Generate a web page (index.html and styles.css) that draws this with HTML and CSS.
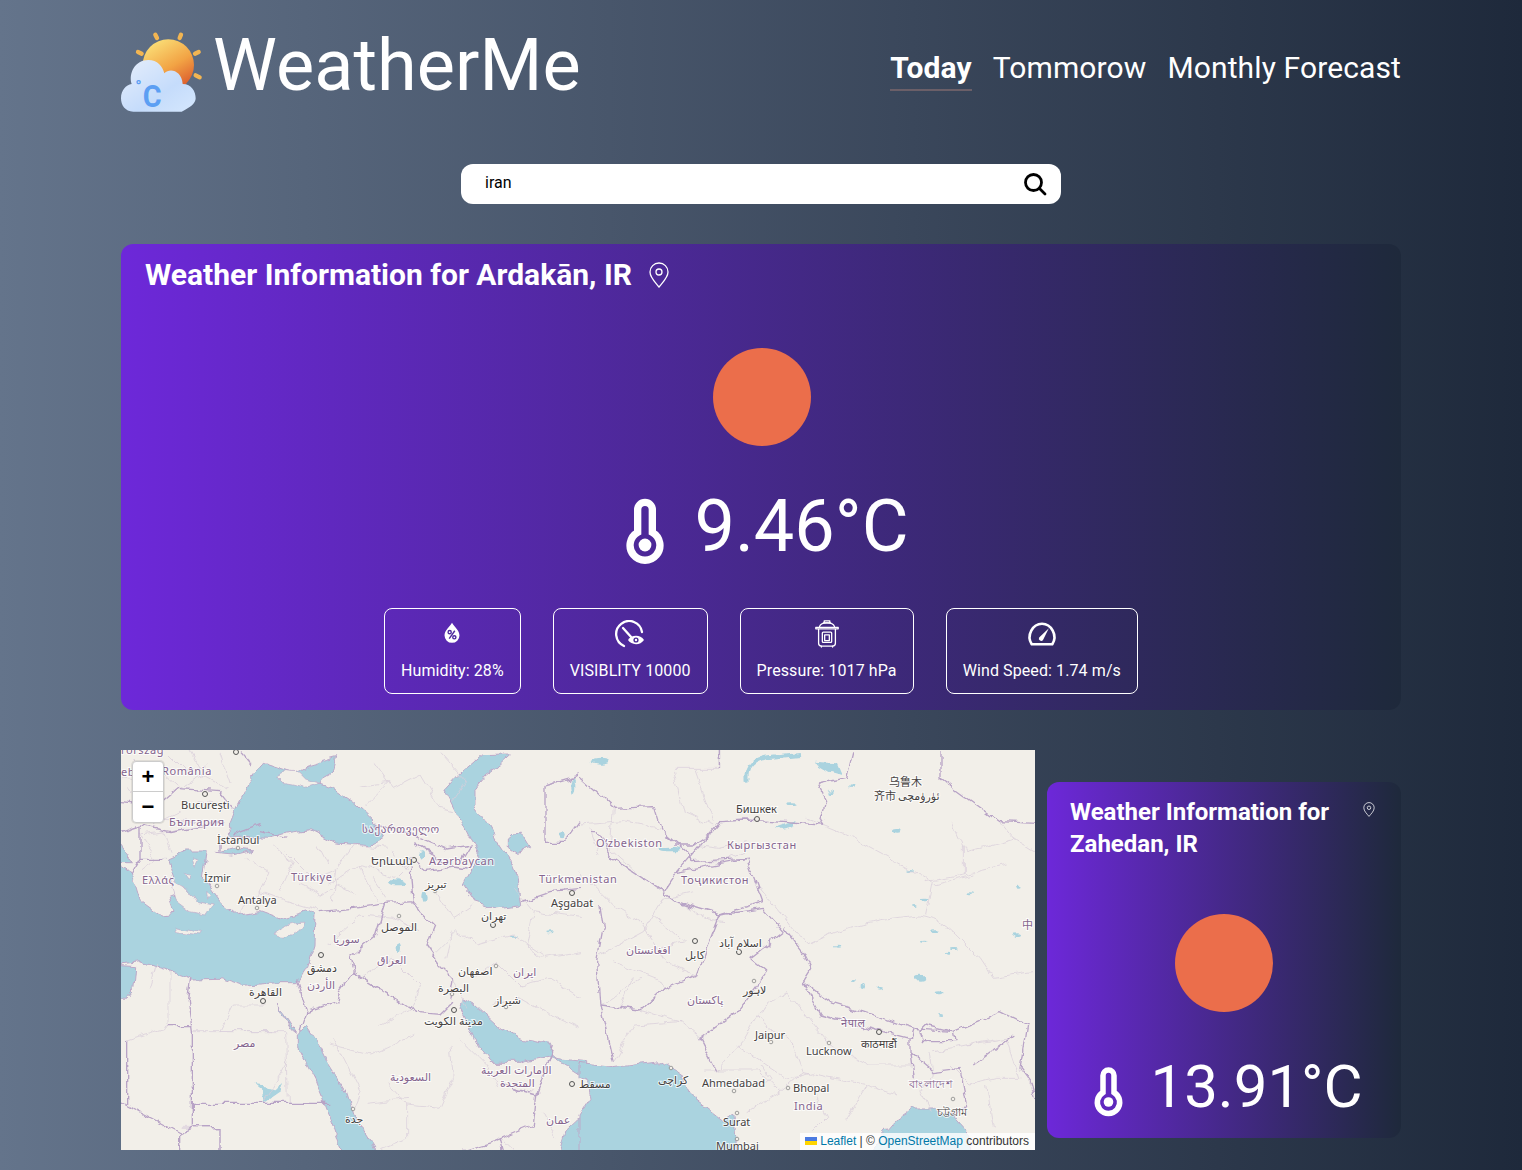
FILE: index.html
```html
<!DOCTYPE html>
<html lang="en">
<head>
<meta charset="utf-8">
<title>WeatherMe</title>
<link rel="stylesheet" href="styles.css">
</head>
<body>
<div class="page">
  <header class="header">
    <div class="brand">
      <svg class="logo" viewBox="63 60 240 246" aria-hidden="true">
        <defs>
          <linearGradient id="sunG" x1="0.2" y1="0" x2="0.8" y2="1"><stop offset="0" stop-color="#fbe27a"/><stop offset=".55" stop-color="#f2a344"/><stop offset="1" stop-color="#d9532a"/></linearGradient>
          <linearGradient id="cloudG" x1="0" y1="0" x2="1" y2="1"><stop offset="0" stop-color="#e6eefb"/><stop offset=".6" stop-color="#c5dcfb"/><stop offset="1" stop-color="#d5e7fd"/></linearGradient>
        </defs>
        <circle cx="205" cy="165" r="77" fill="url(#sunG)"/>
        <g stroke="#f2b552" stroke-width="13" stroke-linecap="round">
          <path d="M166 74l5 10M243 74l-4 10M114 126l11 5M296 126l-11 5M287 196l12 6"/>
        </g>
        <path d="M100 305C75 305 63 285 63 265C63 240 78 225 95 222C85 190 105 150 145 150C172 150 188 168 193 190C210 172 245 182 248 222C275 222 287 245 287 265C287 280 272 292 245 305Z" fill="url(#cloudG)"/>
        <text transform="translate(128 290) scale(.9 1)" class="logo-c">C</text>
        <text x="106" y="246" class="logo-deg">°</text>
      </svg>
      <h1 class="brand-name">WeatherMe</h1>
    </div>
    <nav class="nav">
      <a class="nav-link nav-active">Today</a>
      <a class="nav-link">Tommorow</a>
      <a class="nav-link">Monthly Forecast</a>
    </nav>
  </header>

  <div class="search">
    <span class="search-text">iran</span>
    <svg class="search-icon" viewBox="0 0 24 24" aria-hidden="true"><circle cx="10.500" cy="10.500" r="8" /><path d="M16.500 16.500L22 22"/></svg>
  </div>

  <section class="card card-main">
    <div class="card-title">
      <h2>Weather Information for Ardakān, IR</h2>
      <svg class="pin pin-lg" viewBox="0 0 20 26" aria-hidden="true"><path d="M10 25C6 20 1 15.500 1 10a9 9 0 0 1 18 0C19 15.500 14 20 10 25Z"/><circle cx="10" cy="10" r="3"/></svg>
    </div>
    <div class="sun sun-main"></div>
    <div class="temp temp-main">
      <svg class="thermo thermo-lg" viewBox="0 0 27 47" aria-hidden="true"><path d="M8 24.500V7.500a5.500 5.500 0 0 1 11 0V24.500a11.200 11.200 0 1 1-11 0Z"/><circle cx="13.500" cy="34" r="4.800"/></svg>
      <span>9.46°C</span>
    </div>
    <div class="tiles">
      <div class="tile">
        <svg class="tile-icon" viewBox="-3 -1 30 30" aria-hidden="true"><path class="solid" d="M12 2C9 7 4 10.500 4 15.500a8 8 0 0 0 16 0C20 10.500 15 7 12 2Z"/><g class="cut"><circle cx="9.500" cy="12" r="1.700"/><circle cx="14.500" cy="17.500" r="1.700"/><path d="M15 10.500L9 19"/></g></svg>
        <span>Humidity: 28%</span>
      </div>
      <div class="tile">
        <svg class="tile-icon" viewBox="0 0 30 28" aria-hidden="true"><g class="line"><path d="M9 26A13 13 0 1 1 27 12"/><path d="M8 8l9 10"/></g><path class="solid" d="M13 20c3-5 12-6 16 0c-4 6-13 5-16 0Z"/><circle class="cut-fill" cx="21" cy="20" r="2.600"/><circle class="solid" cx="21" cy="20" r="1.200"/></svg>
        <span>VISIBLITY 10000</span>
      </div>
      <div class="tile">
        <svg class="tile-icon" viewBox="0 0 26 30" aria-hidden="true"><g class="line thin"><path d="M9 3h8M10 3V1h6v2"/><path d="M5 7c1-3 4-4 8-4s7 1 8 4"/><path d="M1 8h24v1.500H1z"/><path d="M4 10v15c0 2 1 3 3 3h12c2 0 3-1 3-3V10"/><rect x="8" y="13" width="10" height="11" rx="1"/><rect x="10.500" y="16" width="5" height="6"/><path d="M7 28v1M19 28v1"/></g></svg>
        <span>Pressure: 1017 hPa</span>
      </div>
      <div class="tile">
        <svg class="tile-icon" viewBox="0 0 28 24" aria-hidden="true"><g class="line"><path d="M5 21h18c5-8-1-18-9-18S0 13 5 21Z"/></g><path class="solid" d="M20 7l-5 10a2 2 0 0 1-3.500-2Z"/></svg>
        <span>Wind Speed: 1.74 m/s</span>
      </div>
    </div>
  </section>

  <div class="lower">
    <div class="map">
      <svg class="map-canvas" viewBox="0 0 914 400">
        <defs>
          <filter id="wiggle" x="-20" y="-20" width="960" height="440" filterUnits="userSpaceOnUse">
            <feTurbulence type="fractalNoise" baseFrequency=".07" numOctaves="3" seed="4" result="n"/>
            <feDisplacementMap in="SourceGraphic" in2="n" scale="9" xChannelSelector="R" yChannelSelector="G"/>
          </filter>
        </defs>
        <rect width="914" height="400" fill="#f2efe9"/>
        <g filter="url(#wiggle)">
        <g transform="translate(-1,-5) scale(.33333)">
          <g class="water">
            <path d="M325 240L345 190L385 110L430 55L480 72L520 85L565 62L650 38L640 78L610 95L600 118L640 130L700 170L775 240L790 282L750 302L650 294L570 254L500 264L440 280L380 274L330 274Z"/>
            <path d="M1080 32L1168 30L1135 60L1095 90L1062 130L1062 182L1100 232L1140 300L1170 345L1192 400L1202 482L1130 492L1062 470L1030 420L1062 360L1082 332L1050 280L1010 200L975 130L1010 92Z"/>
            <path d="M1165 282L1198 255L1232 310L1190 322L1165 305Z"/>
            <path d="M-30 345L25 380L50 420L65 470L120 510L165 505L150 460L175 450L140 345L200 318L262 318L250 400L300 470L350 512L420 500L480 522L560 498L585 510L582 600L560 670L530 716L470 716L370 724L300 700L215 702L130 672L60 650L-30 660Z"/>
            <path d="M-30 660L50 665L45 730L20 760L-30 755Z"/>
            <path d="M290 325L350 308L400 315L340 330Z"/>
            <path d="M-30 250L20 320L40 350L-30 350Z"/>
            <path d="M472 780L490 800L530 862L515 850Z"/>
            <path d="M532 870L560 845L600 905L622 950L680 1042L702 1110L782 1240L672 1240L642 1150L582 1000L532 905Z"/>
            <path d="M1030 762L1062 780L1130 842L1200 882L1296 898L1292 925L1310 940L1400 950L1400 1000L1340 962L1290 932L1200 952L1110 952L1072 902L1050 852L1020 790Z"/>
            <path d="M1400 1100L1335 1160L1312 1240L1400 1240Z"/>
          </g>
          <g class="land">
            <path d="M462 570C480 540 520 530 552 532C540 560 500 590 462 570Z"/>
            <path d="M165 545L245 560L240 570L170 560Z"/>
            <path d="M470 95L500 80L540 85L560 105L600 118L560 130L520 120L490 115Z"/>
            <path d="M150 400L200 430L230 470L280 480L260 510L210 500L170 470Z"/>
            <path d="M215 340L235 345L225 365Z"/><path d="M190 380L215 385L205 400Z"/><path d="M260 440L275 450L262 462Z"/>
          </g>
          <g fill="#aad3df">
            <ellipse cx="830" cy="412" rx="22" ry="9"/><ellipse cx="905" cy="330" rx="8" ry="14"/><ellipse cx="915" cy="455" rx="8" ry="18"/>
            <path d="M400 1020L470 1030L495 1005L485 1040L435 1075L430 1045Z"/>
            <ellipse cx="838" cy="605" rx="8" ry="16"/><ellipse cx="1180" cy="575" rx="10" ry="3"/><ellipse cx="1290" cy="565" rx="14" ry="3"/><ellipse cx="1360" cy="120" rx="6" ry="24"/>
            <ellipse cx="1325" cy="268" rx="12" ry="12"/>
          </g>
          <g class="thin-b">
            <path d="M620 600L720 510L820 520L900 560M620 420L720 360L830 400L880 350M500 320L580 400L650 370L700 300L800 310M420 440L500 470L600 500M380 340L450 380L420 440L350 510M590 300L620 360M720 360L770 470M460 300L520 350L480 440M540 420L600 450L650 420L710 450M760 400L800 460M650 370L640 470M820 320L860 380"/>
            <path d="M60 380L110 340L60 270L140 260L250 240M100 60L180 130L250 90L320 130M20 130L90 220L230 230M200 0L250 90M300 20L330 120M360 20L400 60M130 260L150 320M40 40L100 100L60 160M150 30L200 80L260 60M100 240L180 200M230 170L310 180M0 100L60 110"/>
            <path d="M760 50L820 130L900 90L960 190L1000 200M720 120L810 110L740 180M960 20L1040 110L1000 170"/>
            <path d="M950 620L1010 560L1070 600L1180 570L1260 640L1380 620M1060 700L1130 650L1200 720L1290 700L1380 760M1120 780L1200 760L1270 800L1380 850M1000 700L1040 790M1180 430L1240 500L1380 520M950 440L1000 520L1060 480M1000 560L980 640M1240 500L1220 600L1280 640"/>
            <path d="M720 700L820 640L900 720L870 790M780 850L870 790M640 880L720 1040L700 1090M800 1010L860 1080L860 1180L780 1210M990 900L1000 1000L960 1090L860 1080M630 900L750 930L880 870M20 885L150 845L215 845M150 680L150 845M110 660L90 730M300 860L340 780L440 780M220 860L500 860L505 1075M505 950L430 1075M300 860L450 860M1020 880L1100 960L1130 1020"/>
            <path d="M1270 1100L1310 1180M1140 1180L1180 1216M740 1075L870 1060M185 1150L300 1150L300 1216"/>
          </g>
          <g class="bold-b">
            <path d="M600 500L700 490L800 475L880 470M880 470L900 500L942 540L918 600L960 660L1000 700L990 760M870 370L880 470M800 475L770 570L690 635L700 680L655 745L650 770L560 800L540 860M530 700L560 800M700 680L890 802L962 808L1000 770"/>
            <path d="M215 702L205 770L217 860L217 1075L625 1075M217 1075L217 1148M182 1164L217 1148H300V1216M0 1068L182 1164V1216M152 845H217M20 885V1075"/>
            <path d="M1250 1050L1240 1140L1120 1190L1030 1216M1140 1020L1250 1050L1300 900M1140 1180L1150 1216"/>
            <path d="M1202 470L1290 440L1380 430M1275 120V292H1335L1380 230M1275 120L1380 90M770 240L860 262L980 312L1050 300M870 340L920 380L1000 366L1040 372M880 290L970 350"/>
            <path d="M0 170L110 180L170 130L300 140L340 190M60 240L150 260L310 230M60 240L60 340L130 340M0 260L60 240M60 340L30 390"/>
            <path d="M360 20L395 60M300 290L300 320M340 270L420 240"/>
            <path d="M1050 300L1020 350M500 280L420 260"/>
          </g>
        </g>
        <g transform="translate(459,-5) scale(.33333)">
          <g class="water">
            <path d="M-3 955L100 968L240 950L310 1000L340 1060L430 1130L462 1110L472 1240L-3 1240L-3 1110L30 1060L20 1010L-3 1000Z"/>
            <path d="M945 1130L1000 1092L1060 1092L1120 1112L1172 1170L1172 1240L850 1240Z"/>
          </g>
          <path d="M500 110C495 70 520 40 580 38L660 30" fill="none" stroke="#aad3df" stroke-width="12"/>
          <path d="M700 50L770 55L785 90L750 80Z" fill="#aad3df"/>
          <g fill="#aad3df">
            <path d="M585 250L650 228L640 250L600 258Z"/>
            <ellipse cx="955" cy="262" rx="13" ry="7"/><ellipse cx="1035" cy="462" rx="14" ry="4"/><ellipse cx="1020" cy="698" rx="13" ry="9"/><ellipse cx="1078" cy="742" rx="13" ry="6"/><ellipse cx="905" cy="733" rx="10" ry="4"/><ellipse cx="850" cy="720" rx="5" ry="9"/>
            <ellipse cx="820" cy="708" rx="8" ry="3"/><ellipse cx="1060" cy="560" rx="15" ry="4"/><ellipse cx="1310" cy="572" rx="13" ry="4"/><ellipse cx="1170" cy="445" rx="9" ry="3"/><ellipse cx="995" cy="375" rx="10" ry="3"/><ellipse cx="1120" cy="612" rx="10" ry="3"/><ellipse cx="1030" cy="590" rx="10" ry="3"/><ellipse cx="770" cy="605" rx="8" ry="3"/><ellipse cx="1315" cy="425" rx="7" ry="3"/>
            <ellipse cx="60" cy="50" rx="28" ry="9"/><ellipse cx="270" cy="312" rx="35" ry="7"/><ellipse cx="632" cy="176" rx="16" ry="4"/><ellipse cx="755" cy="140" rx="7" ry="4"/><ellipse cx="815" cy="128" rx="7" ry="4"/><ellipse cx="1000" cy="480" rx="7" ry="3"/><ellipse cx="1080" cy="810" rx="9" ry="3"/><ellipse cx="1100" cy="620" rx="9" ry="3"/>
          </g>
          <g class="thin-b">
            <path d="M0 240L130 230L240 250M280 75L310 200L400 240M345 75L400 230M420 15V70H280M100 190L90 310L170 380M30 250L60 330M0 380L100 480L180 530"/>
            <path d="M60 630L190 560L250 460L340 440M180 530L260 650L350 690M100 650L230 700L250 730M160 700L120 790M60 780L180 700M300 470L380 520L430 530M220 510L310 590L240 610M340 300L420 310L500 290M330 350L430 350L500 310"/>
            <path d="M180 795L300 830L360 880M100 950L160 840L300 830M410 980L480 900L530 810L620 740M530 810L640 900L670 980L600 1040L500 1100M620 740L750 900L870 960L1000 960M670 980L860 1020L950 1050M860 1020L800 1120M470 900L620 1000L700 980M370 975L530 975L600 1040M540 960L570 1000L540 1030M700 1040L740 1120L700 1160"/>
            <path d="M680 600C800 540 900 520 1020 510C1100 520 1130 580 1200 640L1240 700L1380 680M1040 410L1150 390L1280 360M1150 300L1150 390M1120 230L1160 320L1300 280M1260 230L1300 280L1365 320M680 220L800 270L1060 410L1040 510M1060 420L1180 390M540 430L680 600"/>
            <path d="M1050 930L1060 990L1020 1040L1050 1100M1160 900L1280 880L1320 1000L1250 1000L1170 1020L1110 960M1220 1020L1240 1150M1340 1000L1365 1060M1060 920L1250 880"/>
          </g>
          <g class="bold-b">
            <path d="M0 100L100 190L220 185L240 250L320 320L330 350L500 340L530 420L548 470L420 510L350 690L250 730L180 795L60 780L50 650L70 545L60 480"/>
            <path d="M50 260L100 340L250 440L290 380L420 230L500 225L720 240L740 170L715 120L800 100L820 15M290 380L500 340M250 440L290 470L420 510M30 260L50 260M280 300L340 300L400 260"/>
            <path d="M60 780L100 950M410 980L360 880L470 800L560 680L510 640L612 560L550 490L420 510M610 545L670 620L695 670L670 710L750 770L850 800L1000 850L1120 860L1260 800L1340 840L1320 970L1350 1010L1365 1060M670 710L720 810L990 880L1000 850"/>
            <path d="M1020 860L1040 840L1120 860L1125 890L1030 890Z"/>
            <path d="M990 920L1060 980L1140 970L1160 1080L1130 1120M990 880L990 920L1000 1000M1180 960L1300 870M1080 15L1080 100L1260 230L1365 235"/>
            <path d="M418 15V70"/>
          </g>
        </g>
        </g>
        <g class="city-dots">
          <circle cx="115" cy="2" r="2.500"/><circle cx="84" cy="44" r="2.500"/><circle cx="293" cy="110" r="2.500"/><circle cx="372" cy="175" r="2.500"/><circle cx="142" cy="251" r="2.500"/><circle cx="200" cy="205" r="2.500"/><circle cx="333" cy="260" r="2.500"/><circle cx="451" cy="143" r="2.500"/><circle cx="636" cy="69" r="2.500"/><circle cx="574" cy="191" r="2.500"/><circle cx="618" cy="202" r="2.500"/><circle cx="758" cy="282" r="2.500"/><circle cx="451" cy="334" r="2.500"/>
        </g>
        <g class="city-open">
          <circle cx="117" cy="98" r="1.800"/><circle cx="96" cy="136" r="1.800"/><circle cx="136" cy="158" r="1.800"/><circle cx="278" cy="166" r="1.800"/><circle cx="314" cy="141" r="1.800"/><circle cx="375" cy="216" r="1.800"/><circle cx="331" cy="244" r="1.800"/><circle cx="385" cy="257" r="1.800"/><circle cx="232" cy="359" r="1.800"/><circle cx="633" cy="231" r="1.800"/><circle cx="650" cy="292" r="1.800"/><circle cx="708" cy="293" r="1.800"/><circle cx="667" cy="338" r="1.800"/><circle cx="613" cy="341" r="1.800"/><circle cx="616" cy="363" r="1.800"/><circle cx="616" cy="389" r="1.800"/><circle cx="550" cy="318" r="1.800"/><circle cx="832" cy="349" r="1.800"/>
        </g>
        <g class="map-labels">
          <text x="0" y="4" class="c">rország</text>
          <text x="0" y="26" class="c">eb</text>
          <text x="41" y="25" class="c">România</text>
          <text x="60" y="59" class="k">București</text>
          <text x="48" y="76" class="c">България</text>
          <text x="96" y="94" class="k">İstanbul</text>
          <text x="21" y="134" class="c">Ελλάς</text>
          <text x="83" y="132" class="k">İzmir</text>
          <text x="170" y="131" class="c">Türkiye</text>
          <text x="117" y="154" class="k">Antalya</text>
          <text x="241" y="83" class="c">საქართველო</text>
          <text x="250" y="115" class="k">Երևան</text>
          <text x="308" y="115" class="c">Azərbaycan</text>
          <text x="304" y="138" class="k">تبریز</text>
          <text x="360" y="170" class="k">تهران</text>
          <text x="418" y="133" class="c">Türkmenistan</text>
          <text x="430" y="157" class="k">Aşgabat</text>
          <text x="260" y="181" class="k">الموصل</text>
          <text x="212" y="193" class="c">سوریا</text>
          <text x="186" y="222" class="k">دمشق</text>
          <text x="256" y="214" class="c">العراق</text>
          <text x="186" y="239" class="c">الأردن</text>
          <text x="128" y="246" class="k">القاهرة</text>
          <text x="337" y="225" class="k">اصفهان</text>
          <text x="392" y="226" class="c">ایران</text>
          <text x="317" y="242" class="k">البصرة</text>
          <text x="373" y="254" class="k">شیراز</text>
          <text x="303" y="275" class="k">مدينة الكويت</text>
          <text x="113" y="297" class="c">مصر</text>
          <text x="269" y="331" class="c">السعودية</text>
          <text x="360" y="324" class="c">الإمارات العربية</text>
          <text x="379" y="337" class="c">المتحدة</text>
          <text x="224" y="373" class="k">جدة</text>
          <text x="425" y="374" class="c">عمان</text>
          <text x="458" y="338" class="k">مسقط</text>
          <text x="475" y="97" class="c">O‘zbekiston</text>
          <text x="560" y="134" class="c">Тоҷикистон</text>
          <text x="615" y="63" class="k">Бишкек</text>
          <text x="606" y="99" class="c">Кыргызстан</text>
          <text x="505" y="204" class="c">افغانستان</text>
          <text x="564" y="209" class="k">کابل</text>
          <text x="598" y="197" class="k">اسلام آباد</text>
          <text x="566" y="254" class="c">پاکستان</text>
          <text x="622" y="244" class="k">لاہور</text>
          <text x="634" y="289" class="k">Jaipur</text>
          <text x="685" y="305" class="k">Lucknow</text>
          <text x="581" y="337" class="k">Ahmedabad</text>
          <text x="672" y="342" class="k">Bhopal</text>
          <text x="673" y="360" class="c">India</text>
          <text x="602" y="376" class="k">Surat</text>
          <text x="595" y="400" class="k">Mumbai</text>
          <text x="537" y="334" class="k">کراچی</text>
          <text x="720" y="277" class="c">नेपाल</text>
          <text x="740" y="298" class="k">काठमाडौं</text>
          <text x="788" y="338" class="c">বাংলাদেশ</text>
          <text x="816" y="366" class="k">চট্টগ্রাম</text>
          <text x="768" y="36" class="k">乌鲁木</text>
          <text x="753" y="50" class="k">齐市</text>
          <text x="777" y="50" class="k">ئۈرۈمچى</text>
          <text x="901" y="179" class="c">中</text>
        </g>
      </svg>
      <div class="zoom">
        <div class="zoom-btn zoom-plus">+</div>
        <div class="zoom-btn">−</div>
      </div>
      <div class="attrib"><svg class="flag" viewBox="0 0 12 8" aria-hidden="true"><rect width="12" height="4" fill="#4C7BE1"/><rect y="4" width="12" height="4" fill="#FFD500"/></svg> <a class="attrib-link">Leaflet</a> | © <a class="attrib-link">OpenStreetMap</a> contributors</div>
    </div>

    <section class="card card-side">
      <div class="card-title card-title-side">
        <h2>Weather Information for Zahedan, IR</h2>
        <svg class="pin pin-sm" viewBox="0 0 20 26" aria-hidden="true"><path d="M10 25C6 20 1 15.500 1 10a9 9 0 0 1 18 0C19 15.500 14 20 10 25Z"/><circle cx="10" cy="10" r="3"/></svg>
      </div>
      <div class="sun sun-side"></div>
      <div class="temp temp-side">
        <svg class="thermo thermo-sm" viewBox="0 0 27 47" aria-hidden="true"><path d="M8 24.500V7.500a5.500 5.500 0 0 1 11 0V24.500a11.200 11.200 0 1 1-11 0Z"/><circle cx="13.500" cy="34" r="4.800"/></svg>
        <span>13.91°C</span>
      </div>
    </section>
  </div>
</div>
</body>
</html>
```

FILE: styles.css
```css
* { box-sizing: border-box; }
html, body { margin: 0; padding: 0; }
body {
  min-height: 1170px;
  overflow: hidden;
  background: linear-gradient(to right, #64748b, #1e293b);
  font-family: Roboto, "Liberation Sans", sans-serif;
  color: #fff;
}
.page { width: 1280px; margin: 0 auto; height: 1170px; }

.header { display: flex; justify-content: space-between; align-items: flex-start; height: 164px; }
.brand { display: flex; align-items: flex-start; padding-top: 30px; }
.logo { width: 80px; height: 82px; display: block; overflow: visible; }
.logo-c { font: 700 96px Roboto, sans-serif; fill: #5c9ff3; }
.logo-deg { font: 700 50px Roboto, sans-serif; fill: #5c9ff3; }
.brand-name { margin: -4px 0 0 12px; font-size: 72px; line-height: 80px; font-weight: 400; letter-spacing: .1px; }
.nav { display: flex; gap: 21px; padding-top: 50px; }
.nav-link { font-size: 30px; line-height: 36px; padding-bottom: 6px; color: #fff; letter-spacing: .12px; }
.nav-active { font-weight: 700; border-bottom: 2px solid #6b5f68; height: 41px; }

.search {
  width: 600px; height: 40px; margin: 0 auto 40px; padding: 0 14px 0 24px;
  display: flex; align-items: center; justify-content: space-between;
  background: #fff; border-radius: 12px; color: #000; font-size: 16px;
}
.search-text { margin-top: -3px; }
.search-icon { width: 24px; height: 24px; fill: none; stroke: #000; stroke-width: 2.800; stroke-linecap: round; }

.card { background: linear-gradient(to right, #6d28d9, #1e293b); border-radius: 12px; }
.card-main { height: 466px; padding: 13px 24px 0; display: flex; flex-direction: column; align-items: center; }
.card-title { display: flex; align-items: center; align-self: stretch; }
.card-title h2 { margin: 0; font-size: 30px; line-height: 36px; font-weight: 700; }
.pin { fill: none; stroke: #fff; stroke-width: 1.300; }
.pin-lg { width: 20px; height: 26px; margin-left: 17px; }

.sun { border-radius: 50%; background: #eb6e4b; flex: none; }
.sun-main { width: 98px; height: 98px; margin: 55px 0 0 1px; }
.temp { display: flex; align-items: center; }
.temp-main { margin: 30px 0 0 14px; height: 100px; font-size: 72px; gap: 31px; }
.thermo { fill: none; stroke: #fff; stroke-width: 5.500; overflow: visible; }
.thermo circle { fill: #fff; stroke: none; }
.thermo-lg { width: 36px; height: 64px; margin-top: 10px; }
.thermo-sm { width: 27px; height: 47px; margin-top: 10px; }

.tiles { display: flex; gap: 32px; margin-top: 32px; }
.tile {
  height: 86px; padding: 12px 16px 0; border: 1px solid #fff; border-radius: 8px;
  display: flex; flex-direction: column; align-items: center; font-size: 16px; line-height: 24px; letter-spacing: .1px;
}
.tile-icon { height: 28px; width: 32px; margin-bottom: 11px; margin-top: -1px; }
.solid { fill: #fff; }
.cut { fill: none; stroke: #4e2a9e; stroke-width: 1.500; }
.cut-fill { fill: #4a2a96; }
.line { fill: none; stroke: #fff; stroke-width: 2.300; stroke-linecap: round; stroke-linejoin: round; }
.line.thin { stroke-width: 1.400; }

.lower { display: flex; gap: 12px; align-items: flex-start; margin-top: 40px; }
.map { position: relative; width: 914px; height: 400px; overflow: hidden; flex: none; }
.map-canvas { display: block; width: 914px; height: 400px; }
.water path { fill: #aad3df; stroke: #bda9c9; stroke-width: 3; }
.land path { fill: #f2efe9; stroke: #bda9c9; stroke-width: 2; }
.thin-b { fill: none; stroke: #d8cdda; stroke-width: 2.200; }
.bold-b { fill: none; stroke: #b8a3c6; stroke-width: 4; stroke-linejoin: round; }
.city-dots circle { fill: #f2efe9; stroke: #555; stroke-width: 1; }
.city-open circle { fill: #f2efe9; stroke: #8a8a8a; stroke-width: .8; }
.map-labels text {
  font-family: "Noto Sans", "DejaVu Sans", "Noto Sans CJK SC", sans-serif; font-size: 11px;
  paint-order: stroke; stroke: rgba(255,255,255,.75); stroke-width: 2px; letter-spacing: 0;
}
.map-labels .k { fill: #45413f; }
.map-labels .c { fill: #85648e; letter-spacing: .6px; }

.zoom { position: absolute; left: 11px; top: 11px; width: 32px; border: 1px solid #ccc; border-radius: 4px; background: #fff; box-shadow: 0 0 0 1px rgba(0,0,0,.08); }
.zoom-btn { height: 30px; display: flex; align-items: center; justify-content: center; color: #000; font: 700 22px "Liberation Sans", sans-serif; }
.zoom-plus { border-bottom: 1px solid #ccc; }
.attrib {
  position: absolute; right: 0; bottom: 0; height: 17px; padding: 0 6px 0 5px; white-space: nowrap;
  background: rgba(255,255,255,.8); color: #333; font: 12px/17px "Liberation Sans", sans-serif;
}
.attrib-link { color: #0078a8; }
.flag { width: 12px; height: 8px; }

.card-side { width: 354px; height: 356px; margin-top: 32px; padding: 14px 23px 0; display: flex; flex-direction: column; align-items: center; }
.card-title-side { align-items: flex-start; justify-content: space-between; }
.card-title-side h2 { font-size: 24px; line-height: 32px; width: 280px; }
.pin-sm { width: 12px; height: 15px; margin: 6px 3px 0 0; }
.sun-side { margin-top: 54px; width: 98px; height: 98px; }
.temp-side { margin: 26px 0 0 10px; height: 96px; font-size: 60px; gap: 28px; }
```
